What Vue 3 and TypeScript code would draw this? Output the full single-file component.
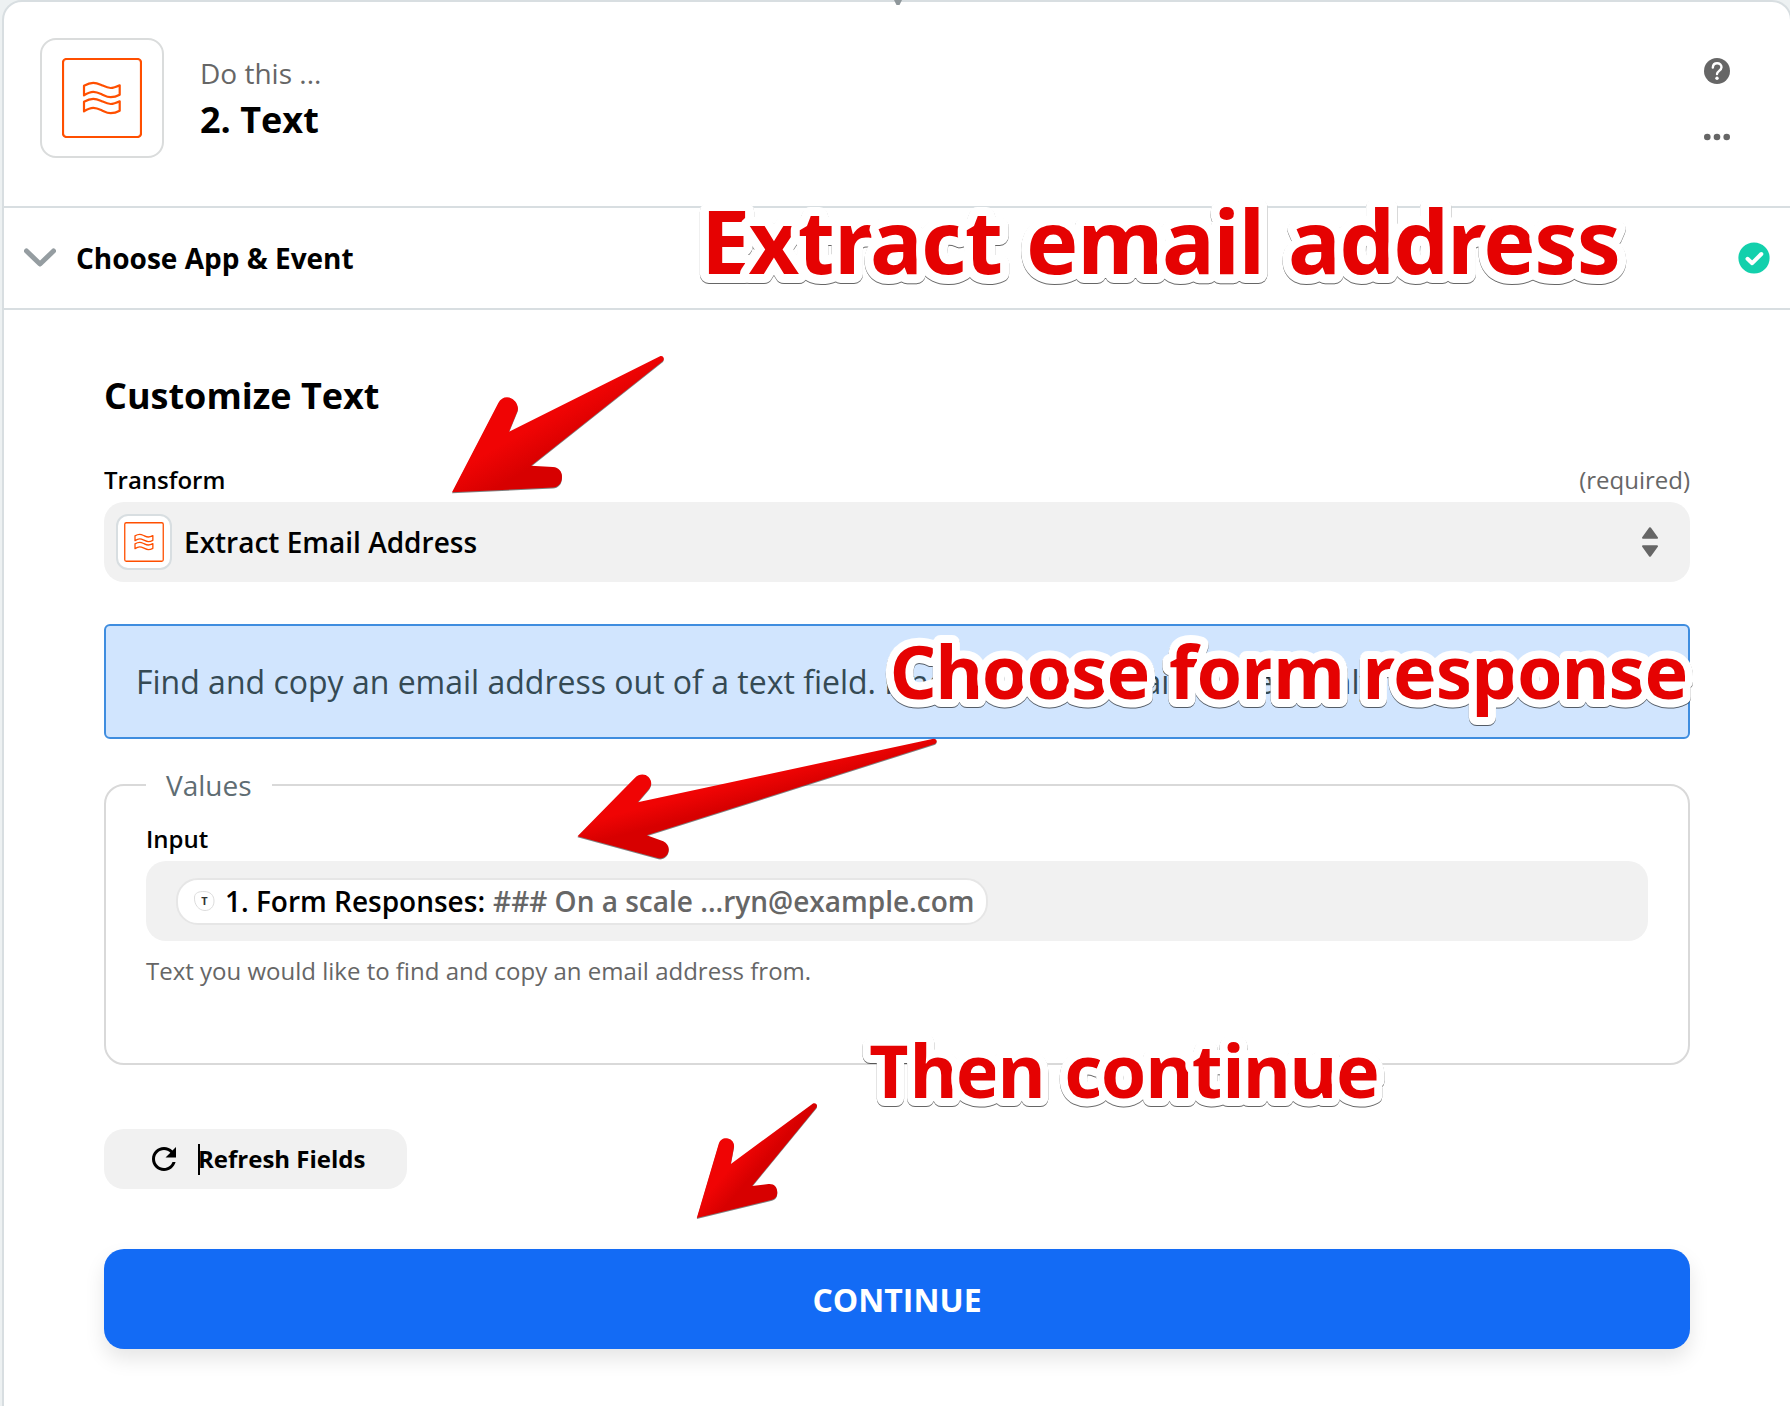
<script setup lang="ts">
interface Word { text: string; x: number; width: number }
interface Note { y: number; size: number; stroke: number; words: Word[] }
interface Arrow { id: string; d: string; from: [number, number]; to: [number, number] }

const notes: Note[] = [
  {
    y: 274, size: 88, stroke: 18,
    words: [
      { text: 'Extract', x: 701, width: 302 },
      { text: 'email', x: 1026, width: 239 },
      { text: 'address', x: 1288, width: 333 },
    ],
  },
  {
    y: 699, size: 73.5, stroke: 16,
    words: [
      { text: 'Choose', x: 889.7, width: 260.6 },
      { text: 'form', x: 1169, width: 176 },
      { text: 'response', x: 1362.6, width: 325.7 },
    ],
  },
  {
    y: 1098, size: 73.5, stroke: 16,
    words: [
      { text: 'Then', x: 869.2, width: 176.3 },
      { text: 'continue', x: 1064.2, width: 315.6 },
    ],
  },
]

const arrows: Arrow[] = [
  {
    id: 'shade-a',
    d: 'M452 492.3L498.3 403C501 397.500 507 396 511.500 398.500C516.500 401 519 407 517.500 411L509 431.700L660 356.200C663 355.200 665 358.500 663 361L531 465.700L553 467C559 467.500 562 471.500 562 477C562 483.500 558 487.300 553 487.600Z',
    from: [528, 407], to: [560, 462],
  },
  {
    id: 'shade-b',
    d: 'M577.500 836.200L635 777.700C639 773.700 645 773.500 648.500 777C652 780.500 652 785 649 789L637.700 802.300L933.500 738.700C937 738.500 938 742.500 934.500 744L646.700 835.300L663.300 841.300C667 843 669 846.500 668.700 850C668.300 855.500 664 859 658.500 858.300Z',
    from: [700, 780], to: [710, 818],
  },
  {
    id: 'shade-c',
    d: 'M696.800 1218L718.700 1144C720 1139.500 724 1137.500 728 1138.500C732.500 1139.500 734.500 1143.500 734 1147L730.800 1164L813 1103.500C816 1102.500 818 1105 816.500 1107.500L752 1186L768.500 1184C774 1183.500 777.300 1187 777.300 1192.500C777.300 1196.500 775.500 1198.700 772 1199.800Z',
    from: [728, 1152], to: [758, 1178],
  },
]

const wave = 'M84 85.700C87 84 90 82.800 93.300 82.800C96.500 82.800 99 84 102 85.300C105 86.700 107.500 88 110.700 88C114 88 117 86.600 119.700 85.300V94.700C117 96.200 114 97.200 110.700 97.200C107.500 97.200 105 95.800 102 94.400C99 93 96.500 91.800 93.300 91.800C90 91.800 87 93.400 84 95.300Z'
</script>

<template>
  <main class="page">
    <section class="card">
      <header class="head">
        <div class="app-icon">
          <svg width="80" height="80" viewBox="62 58 80 80">
            <rect x="63" y="59" width="78" height="78" rx="3.500" fill="none" stroke="#ff4f00" stroke-width="2.200" />
            <g fill="none" stroke="#ff4f00" stroke-width="2.200" stroke-linejoin="round">
              <path :d="wave" />
              <path :d="wave" transform="translate(0 16)" />
            </g>
          </svg>
        </div>
        <div class="titles">
          <div class="kicker">Do this ...</div>
          <h1 class="title">2. Text</h1>
        </div>
        <div class="tools">
          <svg width="26" height="26" viewBox="0 0 26 26">
            <circle cx="13" cy="13" r="13" fill="#666" />
            <path d="M8.800 9.600C9 6.800 10.700 5.300 13.100 5.300C15.700 5.300 17.500 7 17.500 9.300C17.500 12.700 13 13 13 16" fill="none" stroke="#fff" stroke-width="2.400" stroke-linecap="round" />
            <circle cx="13" cy="20.300" r="1.700" fill="#fff" />
          </svg>
          <svg width="26" height="8" viewBox="0 0 26 8">
            <g fill="#666"><circle cx="3.300" cy="4" r="3.300" /><circle cx="13" cy="4" r="3.300" /><circle cx="22.700" cy="4" r="3.300" /></g>
          </svg>
        </div>
      </header>

      <div class="step">
        <svg width="32" height="20" viewBox="0 0 32 20">
          <path d="M2.500 3L16 16L29.500 3" fill="none" stroke="#959da1" stroke-width="5" stroke-linecap="round" stroke-linejoin="round" />
        </svg>
        <h2 class="step-name">Choose App &amp; Event</h2>
        <svg width="32" height="32" viewBox="0 0 32 32">
          <circle cx="16" cy="16" r="15.600" fill="#13d0ac" />
          <path d="M9.500 16.800L14.200 21.200L23.300 12" fill="none" stroke="#fff" stroke-width="4" stroke-linecap="round" stroke-linejoin="round" />
        </svg>
      </div>

      <div class="body">
        <h3 class="heading">Customize Text</h3>
        <div class="label-row">
          <span class="label">Transform</span>
          <span class="required">(required)</span>
        </div>
        <div class="select">
          <div class="mini-icon">
            <svg width="40" height="40" viewBox="62 58 80 80">
              <rect x="63.500" y="59.500" width="77" height="77" rx="3" fill="none" stroke="#ff4f00" stroke-width="2.600" />
              <g fill="none" stroke="#ff4f00" stroke-width="2.600" stroke-linejoin="round">
                <path :d="wave" />
                <path :d="wave" transform="translate(0 16)" />
              </g>
            </svg>
          </div>
          <span class="select-value">Extract Email Address</span>
          <svg width="16" height="30" viewBox="0 0 16 30">
            <path d="M8 1.200L15 10.800H1ZM8 28.800L15 19.200H1Z" fill="#666" stroke="#666" stroke-width="2" stroke-linejoin="round" />
          </svg>
        </div>

        <div class="info">Find and copy an email address out of a text field. Finds the first email address only.</div>

        <fieldset class="values">
          <legend>Values</legend>
          <div class="label input-label">Input</div>
          <div class="input">
            <div class="pill">
              <svg width="22" height="22" viewBox="0 0 22 22">
                <path d="M1.500 7C2 2.500 6 1.500 11 1.500C17 1.500 21 5 21 11C21 17 17 20.500 12 20.500C6 20.500 1 15 1.500 7Z" fill="#fff" stroke="#ddd" />
                <text x="11.500" y="15" text-anchor="middle" class="mono">T</text>
              </svg>
              <span class="pill-name">1. Form Responses:</span>
              <span class="pill-value">### On a scale ...ryn@example.com</span>
            </div>
          </div>
          <div class="help">Text you would like to find and copy an email address from.</div>
        </fieldset>

        <button class="refresh" type="button">
          <svg width="24" height="24" viewBox="4 4 16 16">
            <path d="M17.650 6.350C16.200 4.900 14.210 4 12 4c-4.420 0-7.990 3.580-8 8s3.570 8 8 8c3.730 0 6.840-2.550 7.730-6h-2.080c-.820 2.330-3.040 4-5.650 4-3.310 0-6-2.690-6-6s2.690-6 6-6c1.660 0 3.140.690 4.220 1.780L13 11h7V4l-2.350 2.350z" />
          </svg>
          <span class="caret"></span>
          <span class="refresh-text">Refresh Fields</span>
        </button>

        <button class="continue" type="button">CONTINUE</button>
      </div>
    </section>

    <svg class="notes" width="1790" height="1406" viewBox="0 0 1790 1406">
      <defs>
        <linearGradient v-for="a in arrows" :id="a.id" :key="a.id" gradientUnits="userSpaceOnUse" :x1="a.from[0]" :y1="a.from[1]" :x2="a.to[0]" :y2="a.to[1]">
          <stop offset="0.300" stop-color="#f00404" />
          <stop offset="0.850" stop-color="#d70000" />
        </linearGradient>
      </defs>
      <path d="M894 0H902L899.500 5H896.500Z" fill="#8f979b" />
      <path v-for="a in arrows" :key="a.id" class="arrow" :d="a.d" :fill="`url(#${a.id})`" />
      <g v-for="n in notes" :key="n.y" class="note" :font-size="n.size" :stroke-width="n.stroke">
        <text v-for="w in n.words" :key="w.text" :x="w.x" :y="n.y" :textLength="w.width">{{ w.text }}</text>
      </g>
    </svg>
  </main>
</template>

<style>
body { margin: 0; background: #edf1f2; overflow: hidden; }
</style>

<style scoped>
.page {
  position: relative;
  width: 1790px;
  height: 1406px;
  overflow: hidden;
  background: #edf1f2;
  font-family: "Open Sans", "Noto Sans", sans-serif;
  color: #000;
}
.page * { box-sizing: border-box; }
.card {
  width: 1790px;
  height: 1440px;
  margin-left: 2px;
  background: #fff;
  border: 2px solid #d8dee1;
  border-radius: 20px;
}
h1, h2, h3 { margin: 0; font-weight: 700; white-space: nowrap; }
.head {
  display: flex;
  height: 206px;
  padding: 36px 60px 0 36px;
  border-bottom: 2px solid #d8dee1;
}
.app-icon {
  display: flex;
  align-items: center;
  justify-content: center;
  width: 124px;
  height: 120px;
  border: 2px solid #dadcdc;
  border-radius: 16px;
}
.titles { flex: 1; padding: 16px 0 0 36px; }
.kicker { font-size: 28px; line-height: 38px; color: #666; }
.title { margin-top: 3px; font-size: 36px; line-height: 50px; }
.tools { display: flex; flex-direction: column; align-items: center; gap: 49px; padding-top: 20px; }
.step {
  display: flex;
  align-items: center;
  height: 102px;
  padding: 0 20px;
  border-bottom: 2px solid #d8dee1;
}
.step-name { flex: 1; margin-left: 20px; font-size: 28px; line-height: 38px; }
.body { width: 1586px; margin: 61px 0 0 100px; }
.heading { font-size: 36px; line-height: 50px; }
.label-row { display: flex; justify-content: space-between; margin: 42px 0 5px; }
.label { font-size: 24px; line-height: 34px; font-weight: 600; }
.required { font-size: 24px; line-height: 34px; color: #666; }
.select {
  display: flex;
  align-items: center;
  height: 80px;
  padding: 0 32px 0 12px;
  background: #f1f1f1;
  border-radius: 20px;
}
.mini-icon {
  display: flex;
  align-items: center;
  justify-content: center;
  width: 56px;
  height: 56px;
  background: #fff;
  border: 2px solid #d8dee1;
  border-radius: 12px;
}
.select-value { flex: 1; margin-left: 12px; font-size: 28px; font-weight: 600; line-height: 38px; }
.info {
  height: 115px;
  margin-top: 42px;
  padding: 34px 30px;
  border: 2px solid #3f8ddf;
  border-radius: 6px;
  background: #d1e5fe;
  color: #354a54;
  font-size: 32px;
  line-height: 44px;
  white-space: nowrap;
}
.values {
  height: 299px;
  margin: 27px 0 0;
  padding: 0 40px;
  border: 2px solid #d9d9d9;
  border-radius: 20px;
}
.values legend { padding: 0 20px; font-size: 28px; line-height: 38px; color: #5f6d73; }
.input-label { margin: 18px 0 5px; }
.input {
  display: flex;
  align-items: center;
  height: 80px;
  padding-left: 30px;
  background: #f1f1f1;
  border-radius: 20px;
}
.pill {
  display: flex;
  align-items: center;
  height: 47px;
  padding: 0 12px 0 15px;
  background: #fff;
  border: 2px solid #e6e6e6;
  border-radius: 22px;
  font-size: 28px;
  font-weight: 600;
  line-height: 38px;
  white-space: nowrap;
}
.mono { font-size: 11px; font-weight: 700; fill: #333; }
.pill-name { margin-left: 10px; }
.pill-value { margin-left: 8px; color: #666; }
.help { margin-top: 13px; font-size: 24px; line-height: 34px; color: #666; }
button { font-family: inherit; border: 0; }
.refresh {
  display: flex;
  align-items: center;
  width: 303px;
  height: 60px;
  margin-top: 64px;
  padding: 0 0 0 48px;
  background: #f1f1f1;
  border-radius: 20px;
  color: #000;
  font-size: 24px;
  font-weight: 700;
  line-height: 34px;
  white-space: nowrap;
}
.caret { width: 2px; height: 31px; margin-left: 22px; background: #000; }
.refresh-text { margin-left: -2px; }
.continue {
  display: block;
  width: 1586px;
  height: 100px;
  margin-top: 60px;
  padding: 2px 0 0;
  border-radius: 20px;
  background: #136bf5;
  box-shadow: 0 10px 20px rgba(0, 0, 0, 0.1);
  color: #fff;
  font-size: 32px;
  font-weight: 700;
  line-height: 44px;
}
.notes { position: absolute; left: 0; top: 0; }
.arrow { filter: drop-shadow(0 1px 0.6px rgba(0, 0, 0, 0.5)); }
.note {
  font-family: "Noto Sans", "Open Sans", sans-serif;
  font-weight: 700;
  fill: #e50202;
  stroke: #fff;
  stroke-linejoin: round;
  paint-order: stroke;
  filter: drop-shadow(0 1px 0.4px rgba(0, 0, 0, 0.6));
}
</style>
